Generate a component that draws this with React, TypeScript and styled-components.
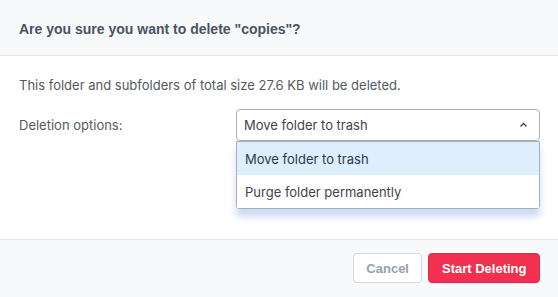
import * as React from 'react';
import styled, { createGlobalStyle } from 'styled-components';

const GlobalStyle = createGlobalStyle`
  html, body {
    margin: 0;
    padding: 0;
    background: #ffffff;
  }
  * {
    box-sizing: border-box;
  }
`;

const Dialog = styled.div`
  width: 558px;
  height: 297px;
  display: flex;
  flex-direction: column;
  background: #fff;
  font-family: Inter, "Liberation Sans", sans-serif;
`;

const Header = styled.div`
  height: 56px;
  flex: none;
  display: flex;
  align-items: center;
  padding: 3px 19px 0;
  background: #f8f9fb;
  border-bottom: 1px solid #e3e7ec;
`;

const Title = styled.h2`
  margin: 0;
  font-family: "Liberation Sans", Arial, sans-serif;
  font-size: 14px;
  font-weight: 700;
  color: #4b5361;
`;

const Body = styled.div`
  flex: 1;
  padding: 21px 18px 0 19px;
  display: flex;
  flex-direction: column;
  gap: 16px;
`;

const Info = styled.p`
  margin: 0;
  font-size: 13px;
  color: #555a60;
  line-height: 16px;
`;

const Row = styled.div`
  display: flex;
  align-items: center;
`;

const Label = styled.label`
  width: 217px;
  font-size: 13px;
  color: #555a60;
`;

const SelectWrap = styled.div`
  position: relative;
  flex: 1;
`;

const SelectBox = styled.div`
  height: 32px;
  display: flex;
  align-items: center;
  justify-content: space-between;
  padding: 0 11px 0 7px;
  border: 1px solid #a9afb6;
  border-radius: 4px;
  font-size: 13px;
  color: #3f444a;
`;

const Menu = styled.ul`
  position: absolute;
  left: 0;
  right: 0;
  top: 32px;
  margin: 0;
  padding: 0;
  list-style: none;
  background: #fff;
  border: 1px solid #a9afb6;
  border-radius: 0 0 3px 3px;
  box-shadow: 0 8px 7px rgba(130, 170, 225, 0.4);
`;

const Option = styled.li<{ $active?: boolean }>`
  height: 33px;
  display: flex;
  align-items: center;
  padding: 0 8px;
  font-size: 13px;
  color: ${p => (p.$active ? '#2e3a4c' : '#3f444a')};
  background: ${p => (p.$active ? '#deeefc' : '#fff')};
`;

const Footer = styled.div`
  height: 58px;
  flex: none;
  display: flex;
  justify-content: flex-end;
  align-items: center;
  gap: 6px;
  padding: 0 18px 1px;
  background: #f8f9fb;
  border-top: 1px solid #e3e7ec;
`;

const Button = styled.button<{ $primary?: boolean }>`
  height: 30px;
  padding: 0 12.5px;
  border-radius: 4px;
  font-family: "Liberation Sans", Arial, sans-serif;
  font-size: 13px;
  font-weight: 700;
  cursor: pointer;
  border: 1px solid ${p => (p.$primary ? '#e42a48' : '#d3d9df')};
  background: ${p => (p.$primary ? '#f2304f' : '#fff')};
  color: ${p => (p.$primary ? '#fff' : '#98a1ab')};
`;

const Chevron = () => (
  <svg width="9" height="6" viewBox="0 0 9 6" fill="none">
    <path d="M1.5 4.5 L4.5 1.5 L7.5 4.5" stroke="#3f444a" strokeWidth="1.3" />
  </svg>
);

export default function App() {
  return (
    <Dialog>
      <GlobalStyle />
      <Header>
        <Title>Are you sure you want to delete "copies"?</Title>
      </Header>
      <Body>
        <Info>This folder and subfolders of total size 27.6 KB will be deleted.</Info>
        <Row>
          <Label>Deletion options:</Label>
          <SelectWrap>
            <SelectBox>
              <span>Move folder to trash</span>
              <Chevron />
            </SelectBox>
            <Menu>
              <Option $active>Move folder to trash</Option>
              <Option>Purge folder permanently</Option>
            </Menu>
          </SelectWrap>
        </Row>
      </Body>
      <Footer>
        <Button>Cancel</Button>
        <Button $primary>Start Deleting</Button>
      </Footer>
    </Dialog>
  );
}
